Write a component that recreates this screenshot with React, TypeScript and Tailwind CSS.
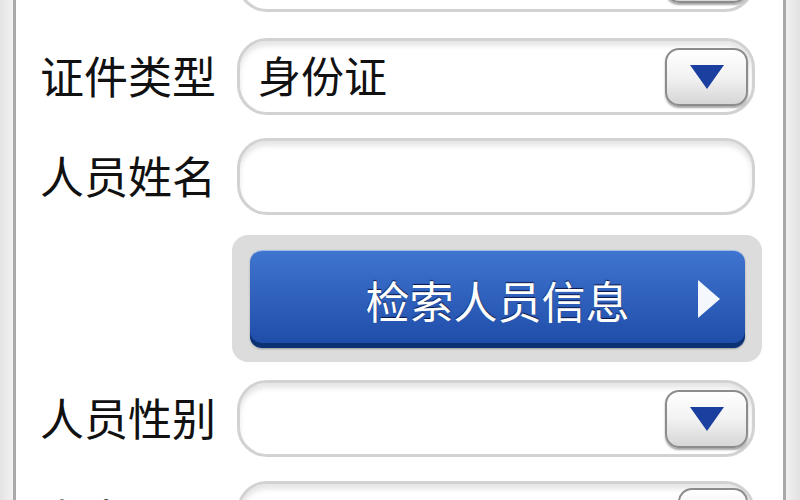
import React from "react";

const font = { fontFamily: '"Noto Sans CJK SC", "Noto Sans", sans-serif' };

function DownArrow() {
  return (
    <svg width="36" height="26" viewBox="0 0 36 26">
      <polygon points="1,1 35,1 18,25" fill="#1b3f9f" />
    </svg>
  );
}

function Dropdown() {
  return (
    <div className="flex h-[58px] w-[83px] items-center justify-center rounded-[14px] border-2 border-[#8c8c8c] bg-gradient-to-b from-white via-[#f2f2f2] to-[#d6d6d6] shadow-[0_2px_2px_rgba(0,0,0,0.35)]">
      <DownArrow />
    </div>
  );
}

function Field({ label, value, select, button, className = "" }: { label: string; value?: string; select?: boolean; button?: string; className?: string }) {
  return (
    <div className={`flex items-center ${className}`}>
      <div className="mt-[-4px] w-[197px] shrink-0 text-[44px] font-normal leading-none text-[#111]">{label}</div>
      <div className="flex h-[77px] w-[518px] items-center justify-between rounded-[30px] border-[3px] border-[#d2d2d2] bg-white pl-[18px] pr-[4px] shadow-[inset_0_5px_5px_rgba(0,0,0,0.10)]">
        <span className="mt-[-4px] text-[43px] font-normal leading-none text-[#111]">{value}</span>
        {select && <Dropdown />}
        {button && (
          <div className="mt-[4px] flex h-[58px] w-[70px] items-center justify-center self-start rounded-[14px] border-2 border-[#8c8c8c] bg-gradient-to-b from-white to-[#dcdcdc] text-[26px] font-bold text-[#1b3f9f]">
            {button}
          </div>
        )}
      </div>
    </div>
  );
}

export default function App() {
  return (
    <div className="flex h-[500px] w-[800px] overflow-hidden bg-white" style={font}>
      <div className="w-[13px] shrink-0 bg-gradient-to-r from-[#e4e4e4] to-[#f2f2f2]" />
      <div className="w-[3px] shrink-0 bg-[#a9a9a9]" />
      <div className="flex flex-1 flex-col pl-[24px]">
        <Field label="" select className="mt-[-65px]" />
        <Field label="证件类型" value="身份证" select className="mt-[26px]" />
        <Field label="人员姓名" className="mt-[23px]" />
        <div className="ml-[192px] mt-[20px] w-[530px] rounded-[16px] bg-[#dcdcdc] pb-[14px] pl-[18px] pr-[17px] pt-[15px]">
          <div className="relative flex h-[98px] items-center justify-center rounded-[12px] border-t border-[#9fbdea] bg-gradient-to-b from-[#3f74cf] to-[#1e4ca8] shadow-[inset_0_-5px_0_#0d3273,0_1px_2px_rgba(0,0,0,0.3)]">
            <span className="text-[44px] font-normal leading-none text-white [text-shadow:0_-1px_1px_rgba(0,0,40,0.8)]">检索人员信息</span>
            <svg className="absolute right-[24px] top-[28px]" width="24" height="40" viewBox="0 0 24 40">
              <polygon points="1,1 23,20 1,39" fill="#f4f7fc" />
            </svg>
          </div>
        </div>
        <Field label="人员性别" select className="mt-[18px]" />
        <Field label="出生日期" button="选择" className="mt-[24px]" />
      </div>
      <div className="w-[3px] shrink-0 bg-[#a9a9a9]" />
      <div className="w-[14px] shrink-0 bg-gradient-to-r from-[#f0f0f0] to-[#e2e2e2]" />
    </div>
  );
}
